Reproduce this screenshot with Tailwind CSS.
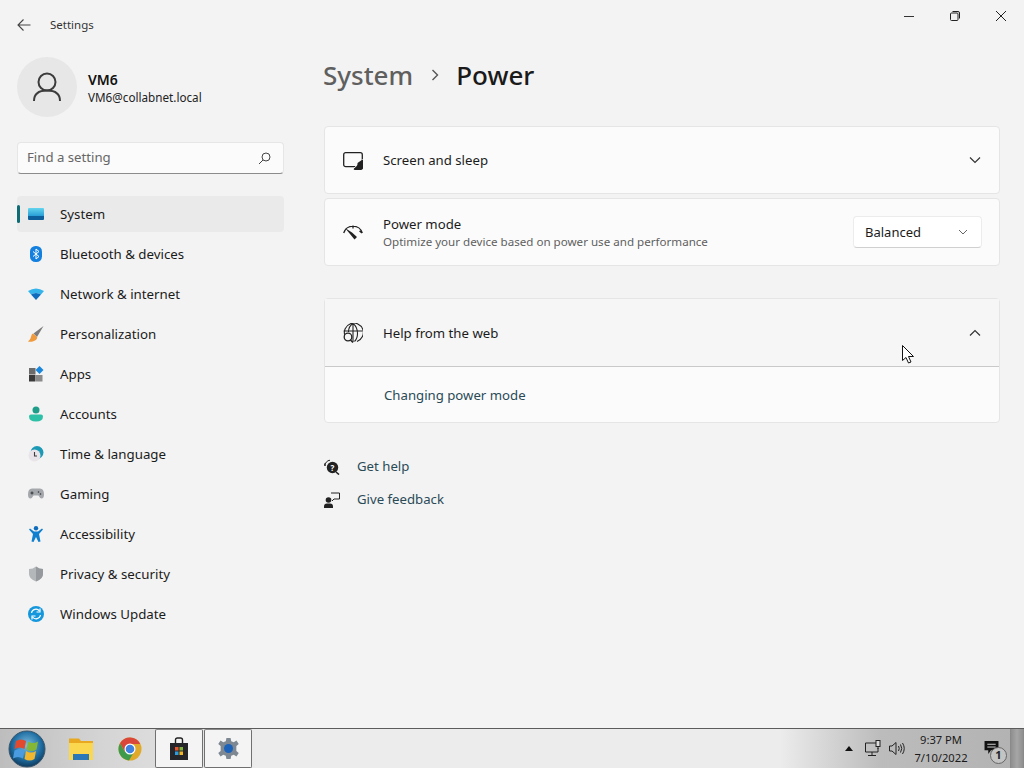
<!DOCTYPE html>
<html lang="en">
<head>
  <meta charset="UTF-8" />
  <title>Settings</title>
  <script src="https://cdn.jsdelivr.net/npm/@tailwindcss/browser@4"></script>
</head>
<body class="w-[1024px] h-[768px] overflow-hidden relative flex flex-col bg-[#f3f3f3] text-[#1b1b1b] font-['Noto_Sans','Open_Sans',sans-serif]">

  <!-- Window -->
  <div class="h-[728px] flex">

    <!-- Sidebar -->
    <div class="w-[324px] shrink-0 flex flex-col pl-[17px] pr-[40px]">
      <div class="h-[57px] flex items-start pt-[16px]">
        <svg class="w-4 h-4 mt-[1px] ml-[-1px]" viewBox="0 0 16 16" fill="none" stroke="#444" stroke-width="1.1"><path d="M14.5 8H2M7.5 2.5 2 8l5.500 5.500"/></svg>
        <span class="ml-[18px] mt-[1px] text-[11.5px] leading-4 text-[#333]">Settings</span>
      </div>

      <div class="h-[60px] flex items-center">
        <div class="w-[60px] h-[60px] rounded-full bg-[#e7e7e7] flex items-center justify-center">
          <svg class="w-8 h-8" viewBox="0 0 32 32" fill="none" stroke="#3c3c3c" stroke-width="2"><circle cx="16" cy="11" r="8.500"/><path d="M3 30c0-7 5-10.500 13-10.500s13 3.500 13 10.500"/></svg>
        </div>
        <div class="ml-[11px] mt-[2px]">
          <div class="text-[14px] leading-[19px] font-semibold text-[#111]">VM6</div>
          <div class="text-[11.7px] leading-[17px] text-[#222]">VM6@collabnet.local</div>
        </div>
      </div>

      <div class="mt-[25px] h-[32px] w-[267px] rounded-[4px] bg-[#fbfbfb] border border-[#e6e6e6] border-b-[#8b8b8b] flex items-center justify-between pl-[9px] pr-[12px]">
        <span class="text-[13.2px] text-[#666]">Find a setting</span>
        <svg class="w-[13px] h-[13px]" viewBox="0 0 13 13" fill="none" stroke="#444" stroke-width="1"><circle cx="8" cy="5" r="4"/><path d="M5 8 1 12"/></svg>
      </div>

      <!-- Nav -->
      <div class="mt-[22px] w-[267px] relative h-[36px] bg-[#eaeaea] rounded-[4px] flex items-center pl-[11px] gap-[16px] text-[13.3px]">
        <span class="absolute left-0 top-[9px] w-[3px] h-[18px] rounded-sm bg-[#0f6c74]"></span>
        <svg class="w-4 h-4" viewBox="0 0 16 16"><defs><linearGradient id="sys" x1="0" y1="0" x2="0" y2="1"><stop offset="0" stop-color="#63d5ee"/><stop offset="0.65" stop-color="#2a9fd6"/><stop offset="0.66" stop-color="#0d5f9c"/><stop offset="1" stop-color="#0d5f9c"/></linearGradient></defs><rect y="2" width="16" height="12" rx="1" fill="url(#sys)"/></svg>
        <span class="pt-[2px]">System</span>
      </div>
      <div class="mt-[4px] w-[267px] flex flex-col gap-[4px] text-[13.3px]">
        <div class="h-[36px] flex items-center pl-[11px] gap-[16px]">
          <svg class="w-4 h-4" viewBox="0 0 16 16"><rect x="2" y="0" width="12" height="16" rx="5.500" fill="#1380e0"/><path d="M5 5.500l6 5-3 2.500V3l3 2.500-6 5" fill="none" stroke="#fff" stroke-width="1"/></svg>
          <span class="pt-[2px]">Bluetooth &amp; devices</span>
        </div>
        <div class="h-[36px] flex items-center pl-[11px] gap-[16px]">
          <svg class="w-4 h-4" viewBox="0 0 16 16"><path d="M0 5Q8 0 16 5L13 8.500Q8 5.500 3 8.500Z" fill="#35b4ec"/><path d="M3 8.500Q8 5.500 13 8.500L8 14Z" fill="#0f6cbd"/></svg>
          <span class="pt-[2px]">Network &amp; internet</span>
        </div>
        <div class="h-[36px] flex items-center pl-[11px] gap-[16px]">
          <svg class="w-4 h-4" viewBox="0 0 16 16"><path d="M15.500 0 5.500 7.500 9 11z" fill="#7c7c7c"/><path d="M5 7.500C2.500 8.500 4 12.500 0 15.500 5 16.500 10 13.500 9 11z" fill="#ef9a3c"/></svg>
          <span class="pt-[2px]">Personalization</span>
        </div>
        <div class="h-[36px] flex items-center pl-[11px] gap-[16px]">
          <svg class="w-4 h-4" viewBox="0 0 16 16"><rect x="1" y="2" width="6.500" height="6.500" fill="#6b6b6b"/><rect x="1" y="9" width="6.500" height="6.500" fill="#3a3a3a"/><rect x="8" y="9" width="6.500" height="6.500" fill="#8a8a8a"/><path d="M11.500 0 15.500 4 11.500 8 7.500 4z" fill="#1a86dc"/></svg>
          <span class="pt-[2px]">Apps</span>
        </div>
        <div class="h-[36px] flex items-center pl-[11px] gap-[16px]">
          <svg class="w-4 h-4" viewBox="0 0 16 16"><circle cx="8" cy="4" r="3.500" fill="#1f9d8b"/><path d="M1 10.500Q1 8.500 3 8.500H13Q15 8.500 15 10.500Q15 15.500 8 15.500T1 10.500Z" fill="#2cc0a6"/></svg>
          <span class="pt-[2px]">Accounts</span>
        </div>
        <div class="h-[36px] flex items-center pl-[11px] gap-[16px]">
          <svg class="w-4 h-4" viewBox="0 0 16 16"><circle cx="9" cy="6.500" r="6.500" fill="#1c9ab5"/><circle cx="6.500" cy="9.500" r="6" fill="#e9e4ea"/><path d="M6.500 6v4H9" fill="none" stroke="#3d3d3d" stroke-width="1.100"/></svg>
          <span class="pt-[2px]">Time &amp; language</span>
        </div>
        <div class="h-[36px] flex items-center pl-[11px] gap-[16px]">
          <svg class="w-4 h-4" viewBox="0 0 16 16"><path d="M4 2.500h8q4 0 4 6 0 4-2.500 4-1.500 0-3-3H5.500q-1.500 3-3 3Q0 12.500 0 8.500q0-6 4-6z" fill="#a4a8ac"/><path d="M2.500 7h3M4 5.500v3" stroke="#333" fill="none"/><circle cx="10.500" cy="6" r=".8" fill="#333"/><circle cx="12.500" cy="8" r=".8" fill="#333"/></svg>
          <span class="pt-[2px]">Gaming</span>
        </div>
        <div class="h-[36px] flex items-center pl-[11px] gap-[16px]">
          <svg class="w-4 h-4" viewBox="0 0 16 16"><circle cx="8" cy="2.200" r="2.200" fill="#0f6cbd"/><path d="M1 3.500 2 2.500 6 5.500H10L14 2.500 15 3.500 11 8 12.500 15.500 10.500 16 8 11 5.500 16 3.500 15.500 5 8Z" fill="#0f7fcf"/></svg>
          <span class="pt-[2px]">Accessibility</span>
        </div>
        <div class="h-[36px] flex items-center pl-[11px] gap-[16px]">
          <svg class="w-4 h-4" viewBox="0 0 16 16"><path d="M8 .5Q11 3 15 3V8Q15 13 8 15.500 1 13 1 8V3Q5 3 8 .5Z" fill="#b4b7ba"/><path d="M8 .5Q11 3 15 3V8Q15 13 8 15.500Z" fill="#96999d"/></svg>
          <span class="pt-[2px]">Privacy &amp; security</span>
        </div>
        <div class="h-[36px] flex items-center pl-[11px] gap-[16px]">
          <svg class="w-4 h-4" viewBox="0 0 16 16"><circle cx="8" cy="8" r="8" fill="#1497dd"/><path d="M3.500 7A4.500 4.500 0 0 1 11.500 5M12.500 9A4.500 4.500 0 0 1 4.500 11" fill="none" stroke="#fff" stroke-width="1.200"/><path d="M12 2.500V6H8.500M4 13.500V10H7.500" fill="none" stroke="#fff" stroke-width="1.200"/></svg>
          <span class="pt-[2px]">Windows Update</span>
        </div>
      </div>
    </div>

    <!-- Content -->
    <div class="flex-1 flex flex-col">
      <div class="h-[55px] flex justify-end text-[#333]">
        <div class="w-[46px] h-[32px] flex items-center justify-center">
          <svg class="w-[10px] h-[10px]" viewBox="0 0 10 10" stroke="#333" fill="none"><path d="M0 5.500h10"/></svg>
        </div>
        <div class="w-[46px] h-[32px] flex items-center justify-center">
          <svg class="w-[10px] h-[10px]" viewBox="0 0 10 10" stroke="#222" fill="none"><rect x=".5" y="2" width="7.500" height="7.500" rx="1"/><path d="M2.500 .5H8Q9.500 .5 9.500 2V7.500"/></svg>
        </div>
        <div class="w-[46px] h-[32px] flex items-center justify-center">
          <svg class="w-[10px] h-[10px]" viewBox="0 0 10 10" stroke="#222" fill="none"><path d="M0 0l10 10M10 0 0 10"/></svg>
        </div>
      </div>

      <div class="h-[40px] ml-[-1px] flex items-center text-[26px] font-medium leading-none">
        <span class="text-[#5f5f5f]">System</span>
        <svg class="w-[10px] h-[12px] ml-[17px] mr-[16px]" viewBox="0 0 10 12" fill="none" stroke="#555" stroke-width="1.400"><path d="M2.500 1 7.500 6l-5 5"/></svg>
        <span class="text-[#1a1a1a]">Power</span>
      </div>

      <div class="mt-[31px] mr-[24px] flex flex-col">
        <div class="h-[68px] rounded-[4px] bg-[#fbfbfb] border border-[#e5e5e5] flex items-center pl-[18px] pr-[18px]">
          <svg class="w-5 h-5" viewBox="0 0 20 20"><rect x=".7" y="2.700" width="18.600" height="14" rx="2" fill="none" stroke="#222" stroke-width="1.300"/><path d="M19.700 9A6.800 6.800 0 0 1 10 19Q15.500 14.500 19.700 9Z" fill="#222" stroke="#fbfbfb" stroke-width="1"/><path d="M19.500 9.500A6.500 6.500 0 0 1 10.500 19C15 18 14.500 13 14.500 13Z" fill="#222"/></svg>
          <span class="ml-[20px] pt-[2px] text-[13.2px] flex-1">Screen and sleep</span>
          <svg class="w-3 h-3" viewBox="0 0 12 12" fill="none" stroke="#333" stroke-width="1.200"><path d="M1 3.500 6 8.500l5-5"/></svg>
        </div>

        <div class="mt-[4px] h-[68px] rounded-[4px] bg-[#fbfbfb] border border-[#e5e5e5] flex items-center pl-[18px] pr-[17px]">
          <svg class="w-5 h-5" viewBox="0 0 20 20" fill="none" stroke="#222" stroke-width="1.300"><path d="M.7 11A9.700 9.700 0 0 1 19.300 11M16.500 9l2.500 2M10 3.500v3"/><path d="M2 6 9 10.500 14 15 11.500 17.500 7 12Z" fill="#222" stroke="none"/></svg>
          <div class="ml-[20px] flex-1">
            <div class="text-[13.2px] leading-[18px]">Power mode</div>
            <div class="text-[11.6px] leading-[17px] text-[#5f5f5f]">Optimize your device based on power use and performance</div>
          </div>
          <div class="w-[129px] h-[32px] rounded-[4px] bg-white border border-[#ececec] border-b-[#d0d0d0] flex items-center justify-between pl-[11px] pr-[13px]">
            <span class="pt-[2px] text-[13px]">Balanced</span>
            <svg class="w-[10px] h-[10px]" viewBox="0 0 10 10" fill="none" stroke="#666"><path d="M1 3 5 7l4-4"/></svg>
          </div>
        </div>

        <div class="mt-[32px] rounded-[4px] bg-[#fbfbfb] border border-[#e5e5e5]">
          <div class="h-[68px] bg-[#f6f6f6] border-b border-[#c9c9c9] flex items-center pl-[18px] pr-[18px]">
            <svg class="w-5 h-5" viewBox="0 0 20 20" fill="none" stroke="#222" stroke-width="1.100"><path d="M2 13A9.500 9.500 0 1 1 14 18.500M.6 8h18.800M10 .5V19M10 .5C6 3 5.500 6 5.500 9M10 .5c4 3 4.500 8 4.500 10 0 3-1 6-3 8"/><circle cx="5" cy="14" r="3.800" fill="#f6f6f6" stroke-width="1.300"/><path d="M7.500 17 10 19.500" stroke-width="1.500"/></svg>
            <span class="ml-[20px] pt-[2px] text-[13.2px] flex-1">Help from the web</span>
            <svg class="w-3 h-3" viewBox="0 0 12 12" fill="none" stroke="#333" stroke-width="1.200"><path d="M1 8.500 6 3.500l5 5"/></svg>
          </div>
          <div class="h-[55px] flex items-center pl-[59px] pt-[2px] text-[13.2px] text-[#2a4a57]">Changing power mode</div>
        </div>
      </div>

      <div class="mt-[34px] flex flex-col gap-[13px] text-[13.2px] text-[#2a4a57]">
        <div class="h-[20px] flex items-center">
          <svg class="w-4 h-4" viewBox="0 0 16 16"><path d="M1 7A5.500 5.500 0 0 1 6 1.200" fill="none" stroke="#222"/><path d="M1 7 .5 4.500" stroke="#222" fill="none"/><circle cx="8.500" cy="8.500" r="5.700" fill="#222"/><path d="M12 13l3 2.500" stroke="#222" stroke-width="1.600"/><text x="8.500" y="11.500" font-size="8" font-weight="700" text-anchor="middle" fill="#fff">?</text></svg>
          <span class="ml-[17px]">Get help</span>
        </div>
        <div class="h-[20px] flex items-center">
          <svg class="w-4 h-4" viewBox="0 0 16 16"><circle cx="4.500" cy="8" r="2.800" fill="#222"/><path d="M0 16V14.500Q0 11.500 3 11.500H6Q9 11.500 9 14.500V16Z" fill="#222"/><path d="M7 1H15.500V7H10L8 9" fill="none" stroke="#222"/></svg>
          <span class="ml-[17px]">Give feedback</span>
        </div>
      </div>
    </div>
  </div>

  <!-- Taskbar -->
  <div class="h-[40px] border-t border-[#5b5b5b] bg-[linear-gradient(90deg,#bdbdbd_0,#d4d4d4_100px,#ececec_260px,#ececec_780px,#bcbcbc_880px,#b2b2b2_100%)] flex items-stretch">
    <div class="w-[54px] flex items-center justify-center">
      <svg class="w-[38px] h-[38px]" viewBox="0 0 38 38"><defs><radialGradient id="orb" cx="0.5" cy="0.4" r="0.65"><stop offset="0" stop-color="#7fc0e0"/><stop offset="0.6" stop-color="#1f6ea3"/><stop offset="1" stop-color="#0b2f4d"/></radialGradient></defs><circle cx="19" cy="19" r="18" fill="url(#orb)" stroke="#39556b"/><path d="M8 11q5-3 10 0l-1.500 8q-5-3-10 0z" fill="#e2492d"/><path d="M20 11.500q5 3 10 0l-1.500 8q-5 3-10 0z" fill="#84b735"/><path d="M6.500 20.500q5-3 10 0l-1.500 8q-5-3-10 0z" fill="#4a9be0"/><path d="M18 21q5 3 10 0l-1.500 8q-5 3-10 0z" fill="#f0b72f"/></svg>
    </div>
    <div class="w-[52px] flex items-center justify-center">
      <svg class="w-[26px] h-[22px] ml-[1px]" viewBox="0 0 26 22"><path d="M1 .5H11L13 3H25V9H1Z" fill="#e8a920"/><rect x="1" y="5" width="24" height="17" fill="#fbd74f"/><rect x="5" y="16" width="16" height="6" fill="#2b78b8"/></svg>
    </div>
    <div class="w-[48px] flex items-center justify-center">
      <svg class="w-6 h-6" viewBox="0 0 24 24"><circle cx="12" cy="12" r="11.500" fill="#e0a92a"/><path d="M12 .5A11.500 11.500 0 0 0 2 6.300L7 15 12 7H22.300A11.500 11.500 0 0 0 12 .5Z" fill="#d9473a"/><path d="M2 6.300A11.500 11.500 0 0 0 11 23.500L16 15 7 15Z" fill="#3f9b4b"/><circle cx="12" cy="12" r="5.500" fill="#fff"/><circle cx="12" cy="12" r="4.300" fill="#3f82e0"/></svg>
    </div>
    <div class="ml-[1px] w-[48px] border border-[#707070] border-t-[#8a8a8a] rounded-[2px] bg-[#f4f4f4] flex items-center justify-center">
      <svg class="w-[18px] h-[23px]" viewBox="0 0 18 23"><path d="M5.500 6V3Q5.500 1 7.500 1H10.500Q12.500 1 12.500 3V6" fill="none" stroke="#222" stroke-width="1.400"/><rect y="6" width="18" height="17" fill="#26262a"/><rect x="5" y="10" width="3.500" height="3.500" fill="#e8542f"/><rect x="9.500" y="10" width="3.500" height="3.500" fill="#7db437"/><rect x="5" y="14.500" width="3.500" height="3.500" fill="#2a9ce0"/><rect x="9.500" y="14.500" width="3.500" height="3.500" fill="#f4b620"/></svg>
    </div>
    <div class="ml-[1px] w-[48px] border border-[#707070] border-t-[#8a8a8a] rounded-[2px] bg-[#f4f4f4] flex items-center justify-center">
      <svg class="w-[23px] h-[23px]" viewBox="0 0 22 22"><path d="M9 1h4l.6 3 2.400 1 2.600-1.700 2.200 3.400L18.500 8.500v5l2.300 1.800-2.200 3.400L16 17l-2.400 1-.6 3H9l-.6-3L6 17l-2.600 1.700-2.200-3.400L3.500 13.500v-5L1.200 6.700l2.200-3.400L6 5l2.400-1z" fill="#7d8892"/><circle cx="11" cy="11" r="4.300" fill="#1c62b8"/></svg>
    </div>

    <div class="flex-1"></div>

    <div class="flex items-center">
      <svg class="w-[8px] h-[5px] mr-[12px]" viewBox="0 0 8 5"><path d="M4 0 8 5H0Z" fill="#111"/></svg>
      <svg class="w-[17px] h-[17px] mr-[7px]" viewBox="0 0 17 17" fill="none" stroke="#222"><path d="M11 3H.5V12H13V8M7 12v3M3 15.500h8"/><rect x="11" y=".5" width="4" height="6" fill="#ddd"/><path d="M13 6.500V9"/></svg>
      <svg class="w-[17px] h-[15px]" viewBox="0 0 17 15" fill="none" stroke="#222"><path d="M.5 5V10H3L7 13.500V1.500L3 5Z"/><path d="M9.500 5Q11 7.500 9.500 10M11.500 3.500Q14 7.500 11.500 11.500M13.500 2Q17 7.500 13.500 13"/></svg>
      <div class="w-[70px] text-center text-[11.2px] leading-[18px] text-[#1a1a1a]">
        <div>9:37 PM</div>
        <div>7/10/2022</div>
      </div>
      <div class="relative w-[24px] h-[24px] ml-[9px] mr-[1px]">
        <svg class="absolute left-[-1px] top-[4px] w-[15px] h-[13px]" viewBox="0 0 15 14"><path d="M0 0H15V10H7L4 14V10H0Z" fill="#111"/><path d="M3 3.500H12M3 6.500H12" stroke="#ddd"/></svg>
        <span class="absolute left-[5px] top-[10px] w-[17px] h-[17px] rounded-full bg-[#c4c4c4] border border-[#666] flex items-center justify-center text-[11px] font-bold text-[#222]">1</span>
      </div>
    </div>
    <div class="w-[14px] border-x border-[#8a8a8a] bg-[linear-gradient(90deg,#8f8f8f,#a6a6a6_50%,#8f8f8f)]"></div>
  </div>

  <!-- Mouse pointer -->
  <svg class="absolute left-[902px] top-[345px] w-[13px] h-[19px]" viewBox="0 0 13 19"><path d="M.5.500V15.500L4 12.500 6.500 18 9 17 6.500 11.500H11.500Z" fill="#fff" stroke="#111"/></svg>
</body>
</html>
